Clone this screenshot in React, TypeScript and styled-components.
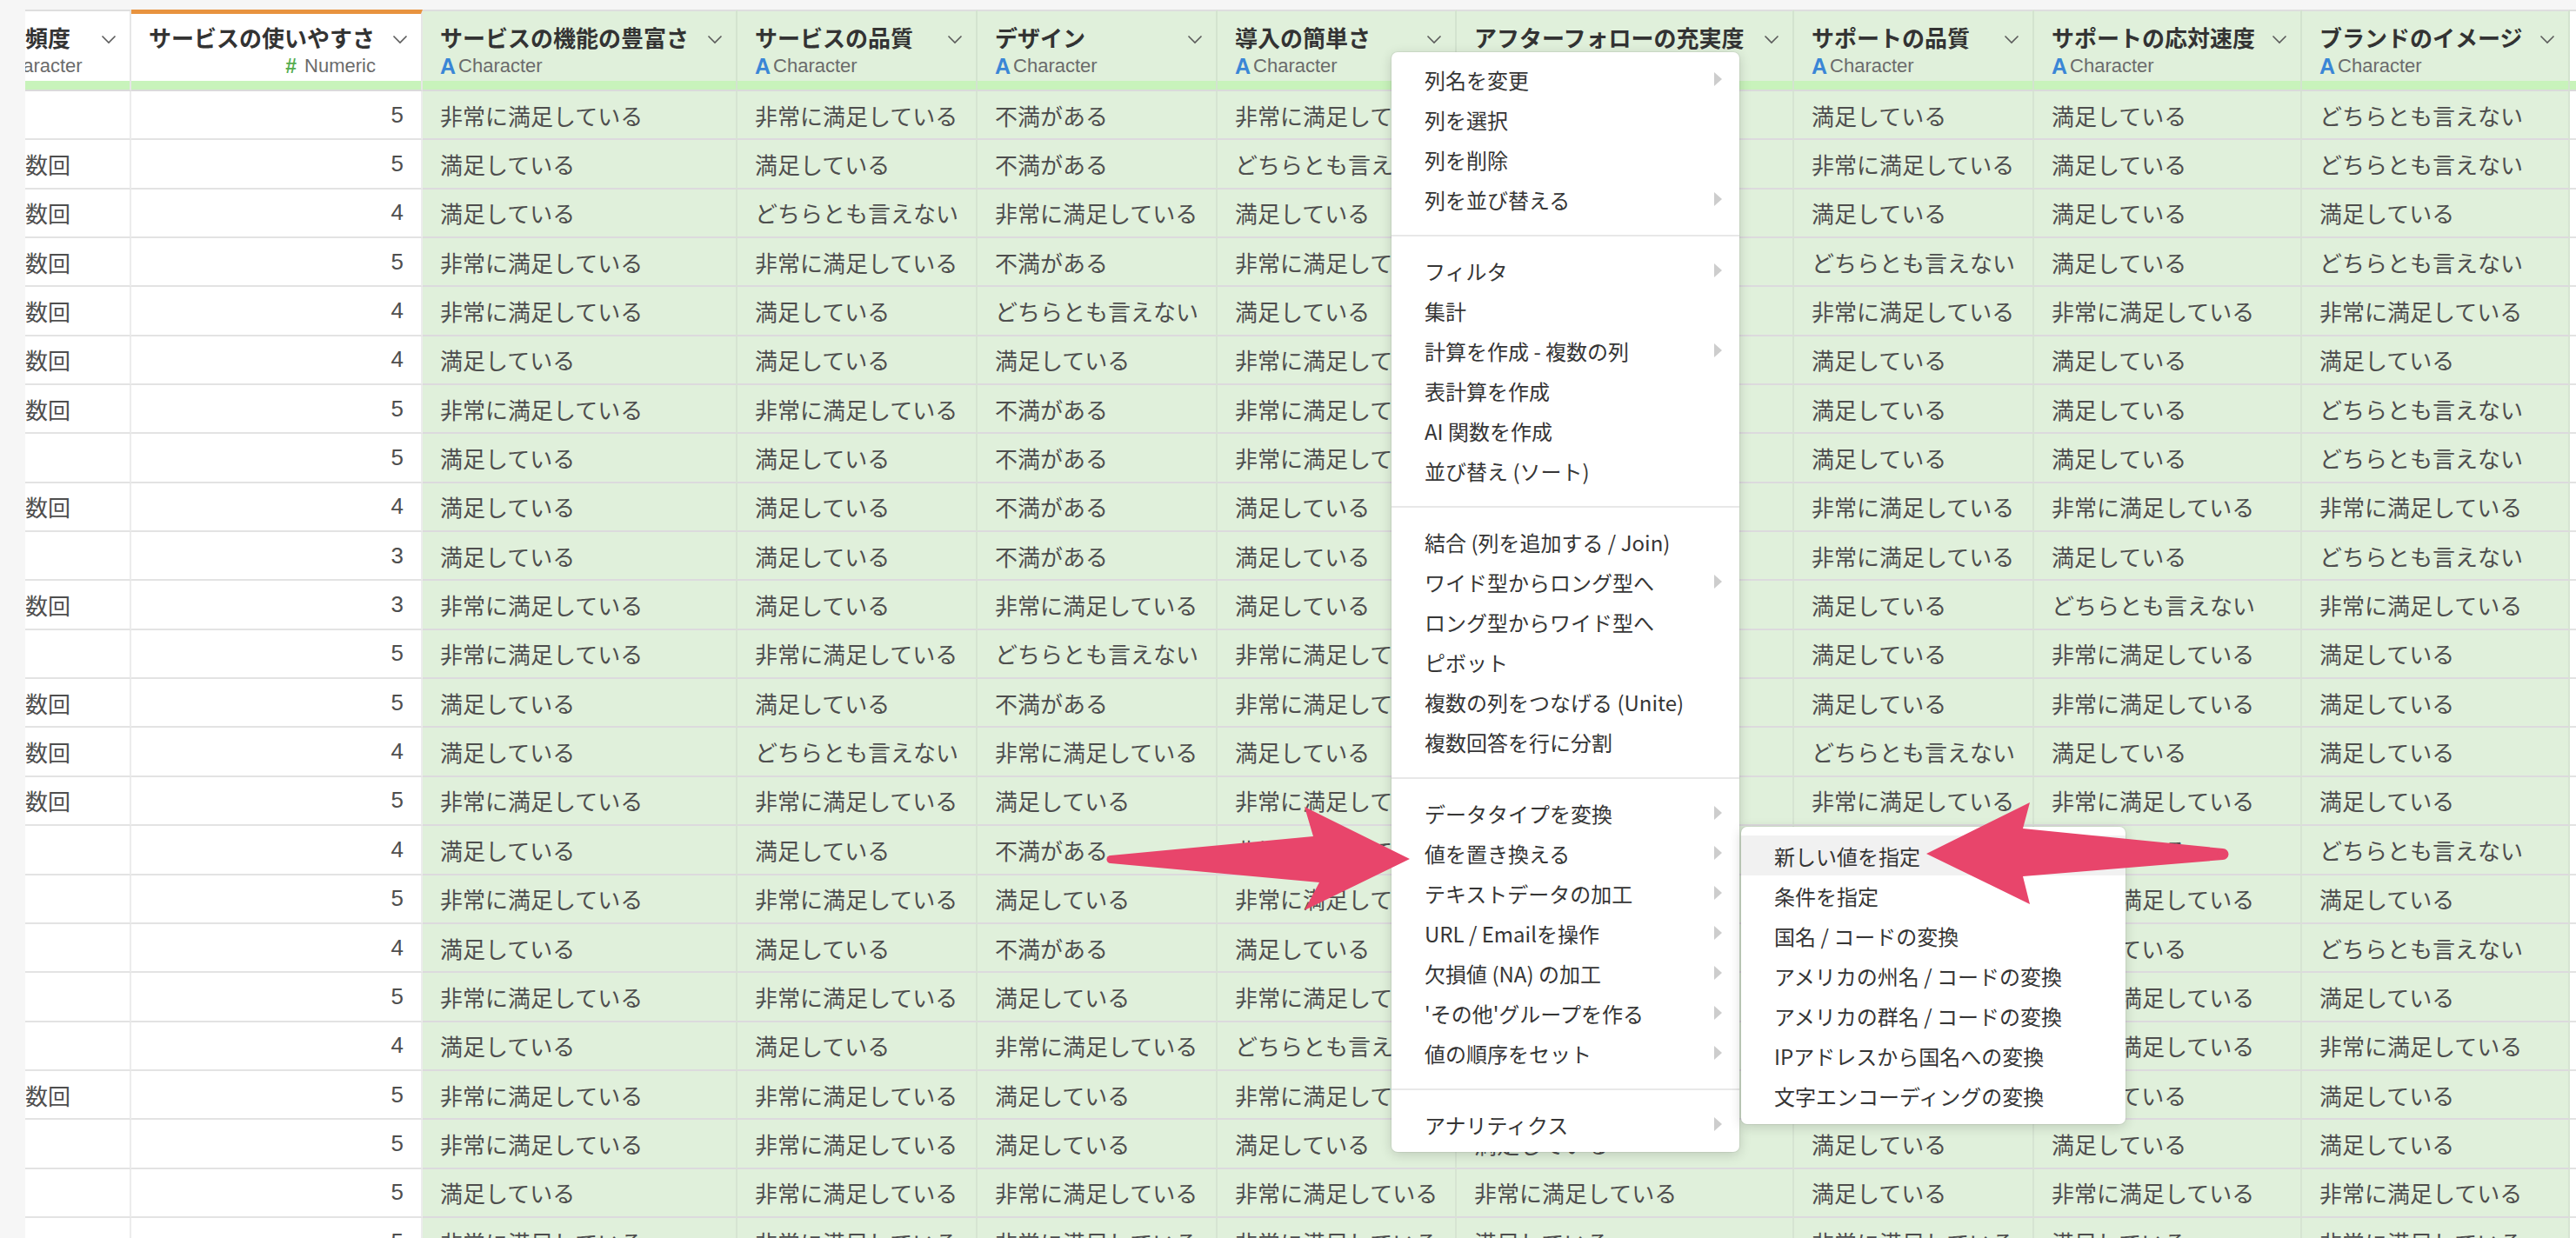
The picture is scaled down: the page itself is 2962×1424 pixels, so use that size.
import React from 'react';
import styled, { createGlobalStyle } from 'styled-components';

const GlobalStyle = createGlobalStyle`
  html, body {
    margin: 0;
    padding: 0;
    width: 2962px;
    height: 1424px;
    overflow: hidden;
    background: #f6f6f6;
  }
  body {
    font-family: "Noto Sans CJK JP", "Noto Sans", "Liberation Sans", sans-serif;
  }
`;

const GREEN = '#e0f0db';
const STRIP = '#c8f3bb';

type Col = { name: string; kind: 'char' | 'num'; width: number; green: boolean; accent?: boolean };

const columns: Col[] = [
  { name: '利用頻度', kind: 'char', width: 194, green: false },
  { name: 'サービスの使いやすさ', kind: 'num', width: 335, green: false, accent: true },
  { name: 'サービスの機能の豊富さ', kind: 'char', width: 362, green: true },
  { name: 'サービスの品質', kind: 'char', width: 276, green: true },
  { name: 'デザイン', kind: 'char', width: 276, green: true },
  { name: '導入の簡単さ', kind: 'char', width: 275, green: true },
  { name: 'アフターフォローの充実度', kind: 'char', width: 388, green: true },
  { name: 'サポートの品質', kind: 'char', width: 276, green: true },
  { name: 'サポートの応対速度', kind: 'char', width: 308, green: true },
  { name: 'ブランドのイメージ', kind: 'char', width: 308, green: true },
  { name: '推奨度', kind: 'char', width: 240, green: false },
];

const H = '非常に満足している';
const M = '満足している';
const F = '不満がある';
const D = 'どちらとも言えない';
const S = '月に数回';
const E = '毎日';

const rows: (string | number)[][] = [
  [E, 5, H, H, F, H, M, M, M, D, ''],
  [S, 5, M, M, F, D, M, H, M, D, ''],
  [S, 4, M, D, H, M, M, M, M, M, ''],
  [S, 5, H, H, F, H, H, D, M, D, ''],
  [S, 4, H, M, D, M, H, H, H, H, ''],
  [S, 4, M, M, M, H, M, M, M, M, ''],
  [S, 5, H, H, F, H, M, M, M, D, ''],
  [E, 5, M, M, F, H, M, M, M, D, ''],
  [S, 4, M, M, F, M, H, H, H, H, ''],
  [E, 3, M, M, F, M, M, H, M, D, ''],
  [S, 3, H, M, H, M, D, M, D, H, ''],
  [E, 5, H, H, D, H, M, M, H, M, ''],
  [S, 5, M, M, F, H, M, M, H, M, ''],
  [S, 4, M, D, H, M, D, D, M, M, ''],
  [S, 5, H, H, M, H, H, H, H, M, ''],
  [E, 4, M, M, F, H, M, M, M, D, ''],
  [E, 5, H, H, M, H, H, H, H, M, ''],
  [E, 4, M, M, F, M, M, M, M, D, ''],
  [E, 5, H, H, M, H, H, H, H, M, ''],
  [E, 4, M, M, H, D, M, H, H, H, ''],
  [S, 5, H, H, M, H, M, M, M, M, ''],
  [E, 5, H, H, M, M, M, M, M, M, ''],
  [E, 5, M, H, H, H, H, M, H, H, ''],
  [E, 5, H, H, H, H, M, H, M, H, ''],
];

const menuGroups: { label: string; sub?: boolean }[][] = [
  [
    { label: '列名を変更', sub: true },
    { label: '列を選択' },
    { label: '列を削除' },
    { label: '列を並び替える', sub: true },
  ],
  [
    { label: 'フィルタ', sub: true },
    { label: '集計' },
    { label: '計算を作成 - 複数の列', sub: true },
    { label: '表計算を作成' },
    { label: 'AI 関数を作成' },
    { label: '並び替え (ソート)' },
  ],
  [
    { label: '結合 (列を追加する / Join)' },
    { label: 'ワイド型からロング型へ', sub: true },
    { label: 'ロング型からワイド型へ' },
    { label: 'ピボット' },
    { label: '複数の列をつなげる (Unite)' },
    { label: '複数回答を行に分割' },
  ],
  [
    { label: 'データタイプを変換', sub: true },
    { label: '値を置き換える', sub: true },
    { label: 'テキストデータの加工', sub: true },
    { label: 'URL / Emailを操作', sub: true },
    { label: '欠損値 (NA) の加工', sub: true },
    { label: "'その他'グループを作る", sub: true },
    { label: '値の順序をセット', sub: true },
  ],
  [{ label: 'アナリティクス', sub: true }],
];

const subItems = [
  '新しい値を指定',
  '条件を指定',
  '国名 / コードの変換',
  'アメリカの州名 / コードの変換',
  'アメリカの群名 / コードの変換',
  'IPアドレスから国名への変換',
  '文字エンコーディングの変換',
];

const Page = styled.div`
  position: relative;
  width: 2962px;
  height: 1424px;
  box-sizing: border-box;
  padding: 11px 0 0 29px;
  background: #f6f6f6;
  overflow: hidden;
  display: flex;
`;

const Viewport = styled.div`
  flex: 1;
  overflow: hidden;
  background: #fff;
`;

const Table = styled.div<{ $cols: string }>`
  display: grid;
  grid-template-columns: ${(p) => p.$cols};
  grid-template-rows: 82px 12px;
  grid-auto-rows: 56.35px;
  margin-left: -72px;
  width: max-content;
`;

const HeaderCell = styled.div<{ $green: boolean; $accent?: boolean }>`
  box-sizing: border-box;
  background: ${(p) => (p.$green ? GREEN : '#fff')};
  border-top: ${(p) => (p.$accent ? '5px solid #e8933f' : '2px solid #dedede')};
  border-right: 2px solid ${(p) => (p.$green ? '#d3e3cf' : '#e6e6e6')};
  padding: ${(p) => (p.$accent ? '11px' : '14px')} 2px 0 20px;
  display: grid;
  grid-template-columns: minmax(0, 1fr) 50px;
  grid-template-rows: 32px 28px;
  row-gap: 3px;
  overflow: hidden;
`;

const HeaderName = styled.div`
  font-weight: 700;
  font-size: 26px;
  line-height: 32px;
  color: #333;
  white-space: nowrap;
  overflow: hidden;
`;

const ChevronBox = styled.div`
  display: flex;
  align-items: center;
  justify-content: flex-end;
  padding: 4px 13px 0 0;
`;

const TypeLabel = styled.div<{ $right?: boolean }>`
  grid-column: 1;
  display: flex;
  align-items: center;
  justify-content: ${(p) => (p.$right ? 'flex-end' : 'flex-start')};
  gap: 3px;
  font-family: "Liberation Sans", Arial, sans-serif;
  font-size: 22px;
  line-height: 28px;
  color: #6b6b6b;
  white-space: nowrap;
`;

const TypeIcon = styled.span<{ $num?: boolean }>`
  font-family: "Liberation Sans", Arial, sans-serif;
  font-weight: 700;
  font-size: ${(p) => (p.$num ? '23px' : '25px')};
  color: ${(p) => (p.$num ? '#55ad4f' : '#3a86d6')};
  margin-right: ${(p) => (p.$num ? '6px' : '0')};
`;

const StripCell = styled.div<{ $green: boolean }>`
  box-sizing: border-box;
  background: ${STRIP};
  border-bottom: 2px solid #dadada;
  border-right: 2px solid ${(p) => (p.$green ? '#d3e3cf' : '#e6e6e6')};
`;

const DataCell = styled.div<{ $green: boolean; $right?: boolean }>`
  box-sizing: border-box;
  background: ${(p) => (p.$green ? GREEN : '#fff')};
  border-bottom: 2px solid ${(p) => (p.$green ? '#dcdadd' : '#e3e3e3')};
  border-right: 2px solid ${(p) => (p.$green ? '#d6e4d2' : '#ececec')};
  padding: 0 20px;
  display: flex;
  align-items: center;
  justify-content: ${(p) => (p.$right ? 'flex-end' : 'flex-start')};
  font-family: ${(p) =>
    p.$right ? '"Liberation Sans", Arial, sans-serif' : '"Noto Sans CJK JP", "Noto Sans", sans-serif'};
  font-size: 26px;
  color: #4e4e4e;
  white-space: nowrap;
  overflow: hidden;
`;

const Menu = styled.div`
  position: absolute;
  left: 1600px;
  top: 60px;
  width: 400px;
  box-sizing: border-box;
  padding: 8px 0 9px;
  background: #fff;
  border-radius: 7px;
  box-shadow: 0 3px 14px rgba(0, 0, 0, 0.16), 0 0 0 1px rgba(0, 0, 0, 0.05);
`;

const SubMenu = styled(Menu)`
  left: 2002px;
  top: 951px;
  width: 442px;
  padding: 10px 0 10px;
`;

const MenuItem = styled.div<{ $active?: boolean }>`
  height: 46px;
  box-sizing: border-box;
  padding: 0 20px 0 38px;
  display: flex;
  align-items: center;
  justify-content: space-between;
  font-size: 24px;
  color: #353535;
  white-space: nowrap;
  background: ${(p) => (p.$active ? '#f1f1f1' : 'transparent')};
`;

const Caret = styled.span`
  width: 0;
  height: 0;
  border-top: 8px solid transparent;
  border-bottom: 8px solid transparent;
  border-left: 9px solid #cdcdcd;
`;

const Separator = styled.div`
  height: 2px;
  background: #e8e8e8;
  margin: 18px 0 16px;
`;

const Overlay = styled.svg`
  position: absolute;
  left: 0;
  top: 0;
  pointer-events: none;
`;

const Chevron = () => (
  <svg width="18" height="11" viewBox="0 0 18 11">
    <polyline points="1.5,1.5 9,9 16.5,1.5" fill="none" stroke="#5c5c5c" strokeWidth="1.6" />
  </svg>
);

export default function App() {
  const cols = columns.map((c) => `${c.width}px`).join(' ');
  return (
    <>
      <GlobalStyle />
      <Page>
        <Viewport>
          <Table $cols={cols}>
            {columns.map((c, i) => (
              <HeaderCell key={`h${i}`} $green={c.green} $accent={c.accent}>
                <HeaderName>{c.name}</HeaderName>
                <ChevronBox>
                  <Chevron />
                </ChevronBox>
                <TypeLabel $right={c.kind === 'num'}>
                  {c.kind === 'num' ? <TypeIcon $num>#</TypeIcon> : <TypeIcon>A</TypeIcon>}
                  {c.kind === 'num' ? 'Numeric' : 'Character'}
                </TypeLabel>
              </HeaderCell>
            ))}
            {columns.map((c, i) => (
              <StripCell key={`s${i}`} $green={c.green} />
            ))}
            {rows.map((r, ri) =>
              columns.map((c, ci) => (
                <DataCell key={`${ri}-${ci}`} $green={c.green} $right={c.kind === 'num'}>
                  {r[ci]}
                </DataCell>
              ))
            )}
          </Table>
        </Viewport>

        <Menu>
          {menuGroups.map((g, gi) => (
            <React.Fragment key={gi}>
              {gi > 0 && <Separator />}
              {g.map((it) => (
                <MenuItem key={it.label}>
                  <span>{it.label}</span>
                  {it.sub && <Caret />}
                </MenuItem>
              ))}
            </React.Fragment>
          ))}
        </Menu>

        <SubMenu>
          {subItems.map((s, i) => (
            <MenuItem key={s} $active={i === 0}>
              <span>{s}</span>
            </MenuItem>
          ))}
        </SubMenu>

        <Overlay width="2962" height="1424" viewBox="0 0 2962 1424">
          <g fill="#e8456b">
            <polygon points="1277,984 1510,962 1500,928 1621,988 1500,1047 1517,1015 1277,993" />
            <circle cx="1277" cy="988.5" r="4.5" />
            <polygon points="2215,982 2334,923 2326,953 2556,976 2556,989 2326,1008 2334,1040" />
            <circle cx="2556" cy="982.5" r="6.5" />
          </g>
        </Overlay>
      </Page>
    </>
  );
}
